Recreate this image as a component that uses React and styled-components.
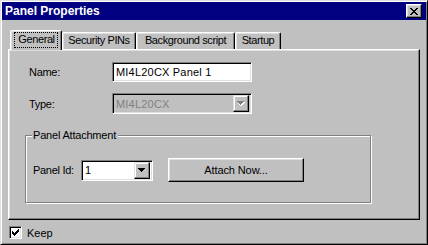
import React from "react";
import styled, { createGlobalStyle } from "styled-components";

const GlobalStyle = createGlobalStyle`
  body {
    margin: 0;
    background: #c0c0c0;
    font-family: "Liberation Sans", Arial, sans-serif;
    font-size: 11px;
    color: #000;
  }
`;

const Window = styled.div`
  width: 428px;
  height: 245px;
  box-sizing: border-box;
  background: #c0c0c0;
  border: 1px solid;
  border-color: #dfdfdf #000 #000 #dfdfdf;
  box-shadow: inset 1px 1px #fff, inset -1px -1px #808080;
  padding: 1px;
  display: flex;
  flex-direction: column;
`;

const TitleBar = styled.div`
  height: 18px;
  background: #000080;
  color: #fff;
  display: flex;
  align-items: center;
  justify-content: space-between;
  padding: 0 4px 0 3px;
`;

const Title = styled.span`
  font-weight: bold;
  font-size: 12px;
  letter-spacing: 0;
`;

const CloseButton = styled.div`
  width: 16px;
  height: 14px;
  box-sizing: border-box;
  background: #c0c0c0;
  border: 1px solid;
  border-color: #fff #000 #000 #fff;
  box-shadow: inset -1px -1px #808080, inset 1px 1px #dfdfdf;
  display: flex;
  align-items: center;
  justify-content: center;
`;

const TabRow = styled.div`
  margin: 10px 6px 0;
  height: 19px;
  display: flex;
  align-items: flex-end;
  padding-left: 2px;
`;

const Tab = styled.div`
  position: relative;
  z-index: ${(p) => (p.$selected ? 1 : 0)};
  width: ${(p) => p.$w}px;
  height: ${(p) => (p.$selected ? 20 : 17)}px;
  margin-bottom: ${(p) => (p.$selected ? -1 : 0)}px;
  margin-right: ${(p) => p.$gap || 0}px;
  box-sizing: border-box;
  background: #c0c0c0;
  border: 1px solid;
  border-color: #fff #000 transparent #fff;
  border-bottom: none;
  border-radius: 2px 2px 0 0;
  box-shadow: inset -1px 0 #808080, inset 1px 1px #dfdfdf;
  display: flex;
  justify-content: center;
  padding-top: ${(p) => (p.$selected ? 2 : 1)}px;
  letter-spacing: -0.4px;
  white-space: nowrap;
`;

const FocusText = styled.span`
  outline: 1px dotted #000;
  padding: 0 2px 1px 3px;
  height: 13px;
  line-height: 13px;
`;

const TabText = styled.span`
  line-height: 13px;
`;

const Panel = styled.div`
  margin: 0 6px;
  height: 171px;
  box-sizing: border-box;
  border: 1px solid;
  border-color: #fff #000 #000 #fff;
  box-shadow: inset -1px -1px #808080, inset 1px 1px #dfdfdf;
  padding: 12px 16px 0;
  display: flex;
  flex-direction: column;
`;

const FieldRow = styled.div`
  display: flex;
  align-items: center;
  padding-left: 4px;
  margin-top: ${(p) => p.$top || 0}px;
`;

const Label = styled.span`
  width: ${(p) => p.$w}px;
  flex-shrink: 0;
  letter-spacing: -0.3px;
`;

const TextField = styled.div`
  width: 140px;
  height: 20px;
  box-sizing: border-box;
  background: ${(p) => (p.$disabled ? "#c0c0c0" : "#fff")};
  color: ${(p) => (p.$disabled ? "#808080" : "#000")};
  border: 1px solid;
  border-color: #808080 #fff #fff #808080;
  box-shadow: inset 1px 1px #000, inset -1px -1px #dfdfdf;
  display: flex;
  align-items: center;
  padding-left: 3px;
  letter-spacing: 0.2px;
`;

const Combo = styled.div`
  width: ${(p) => p.$w}px;
  height: 21px;
  box-sizing: border-box;
  background: ${(p) => (p.$disabled ? "#c0c0c0" : "#fff")};
  color: ${(p) => (p.$disabled ? "#808080" : "#000")};
  border: 1px solid;
  border-color: #808080 #fff #fff #808080;
  box-shadow: inset 1px 1px #000, inset -1px -1px #dfdfdf;
  display: flex;
  align-items: center;
  padding: 2px 2px 2px 3px;
  letter-spacing: 0.2px;
`;

const ComboText = styled.span`
  flex: 1;
`;

const DropButton = styled.div`
  width: 16px;
  height: 17px;
  box-sizing: border-box;
  background: #c0c0c0;
  border: 1px solid;
  border-color: #dfdfdf #000 #000 #dfdfdf;
  box-shadow: inset -1px -1px #808080, inset 1px 1px #fff;
  display: flex;
  align-items: center;
  justify-content: center;
`;

const GroupBox = styled.div`
  position: relative;
  margin-top: 21px;
  width: 346px;
  height: 68px;
  box-sizing: border-box;
  border: 1px solid #808080;
  box-shadow: 1px 1px 0 #fff, inset 1px 1px 0 #fff;
  padding: 22px 0 0 7px;
`;

const Legend = styled.span`
  position: absolute;
  top: -8px;
  left: 6px;
  padding: 0 2px 0 1px;
  background: #c0c0c0;
  line-height: 14px;
  letter-spacing: -0.2px;
`;

const GroupRow = styled.div`
  display: flex;
  align-items: center;
  height: 24px;
`;

const Button = styled.div`
  margin-left: 15px;
  width: 136px;
  height: 24px;
  box-sizing: border-box;
  background: #c0c0c0;
  border: 1px solid;
  border-color: #fff #000 #000 #fff;
  box-shadow: inset -1px -1px #808080, inset 1px 1px #dfdfdf;
  display: flex;
  align-items: center;
  justify-content: center;
  letter-spacing: -0.1px;
`;

const CheckRow = styled.div`
  display: flex;
  align-items: center;
  margin: 6px 0 0 7px;
  height: 13px;
  gap: 5px;
`;

const CheckBox = styled.div`
  width: 13px;
  height: 13px;
  box-sizing: border-box;
  background: #fff;
  border: 1px solid;
  border-color: #808080 #fff #fff #808080;
  box-shadow: inset 1px 1px #000, inset -1px -1px #dfdfdf;
  display: flex;
  align-items: center;
  justify-content: center;
`;

const Arrow = ({ disabled }) => (
  <svg width="8" height="5" viewBox="0 0 8 5" shapeRendering="crispEdges">
    {disabled && <path d="M1 1h7v1h-1v1h-1v1h-1v1h-2v-1h-1v-1h-1z" fill="#fff" />}
    <path d="M0 0h7v1h-1v1h-1v1h-1v1h-1v-1h-1v-1h-1v-1h-1z" fill={disabled ? "#808080" : "#000"} />
  </svg>
);

const CloseIcon = () => (
  <svg width="8" height="7" viewBox="0 0 8 7" shapeRendering="crispEdges">
    <path
      d="M0 0h2v1h1v1h2v-1h1v-1h2v1h-1v1h-1v1h-1v1h1v1h1v1h1v1h-2v-1h-1v-1h-2v1h-1v1h-2v-1h1v-1h1v-1h1v-1h-1v-1h-1v-1h-1z"
      fill="#000"
    />
  </svg>
);

const CheckIcon = () => (
  <svg width="7" height="7" viewBox="0 0 7 7" shapeRendering="crispEdges">
    <path
      d="M6 0h1v3h-1v1h-1v1h-1v1h-1v1h-1v-1h-1v-1h-1v-3h1v1h1v1h1v-1h1v-1h1v-1h1z"
      fill="#000"
    />
  </svg>
);

const tabs = [
  { label: "General", w: 52, gap: 0, selected: true },
  { label: "Security PINs", w: 74, gap: 0 },
  { label: "Background script", w: 99, gap: 0 },
  { label: "Startup", w: 46, gap: 0 },
];

export default function App() {
  return (
    <>
      <GlobalStyle />
      <Window>
        <TitleBar>
          <Title>Panel Properties</Title>
          <CloseButton>
            <CloseIcon />
          </CloseButton>
        </TitleBar>

        <TabRow>
          {tabs.map((t) => (
            <Tab key={t.label} $w={t.w} $gap={t.gap} $selected={t.selected}>
              {t.selected ? <FocusText>{t.label}</FocusText> : <TabText>{t.label}</TabText>}
            </Tab>
          ))}
        </TabRow>

        <Panel>
          <FieldRow>
            <Label $w={83}>Name:</Label>
            <TextField>MI4L20CX Panel 1</TextField>
          </FieldRow>
          <FieldRow $top={11}>
            <Label $w={83}>Type:</Label>
            <Combo $w={140} $disabled>
              <ComboText>MI4L20CX</ComboText>
              <DropButton>
                <Arrow disabled />
              </DropButton>
            </Combo>
          </FieldRow>

          <GroupBox>
            <Legend>Panel Attachment</Legend>
            <GroupRow>
              <Label $w={48}>Panel Id:</Label>
              <Combo $w={72}>
                <ComboText>1</ComboText>
                <DropButton>
                  <Arrow />
                </DropButton>
              </Combo>
              <Button>Attach Now...</Button>
            </GroupRow>
          </GroupBox>
        </Panel>

        <CheckRow>
          <CheckBox>
            <CheckIcon />
          </CheckBox>
          <span>Keep</span>
        </CheckRow>
      </Window>
    </>
  );
}
